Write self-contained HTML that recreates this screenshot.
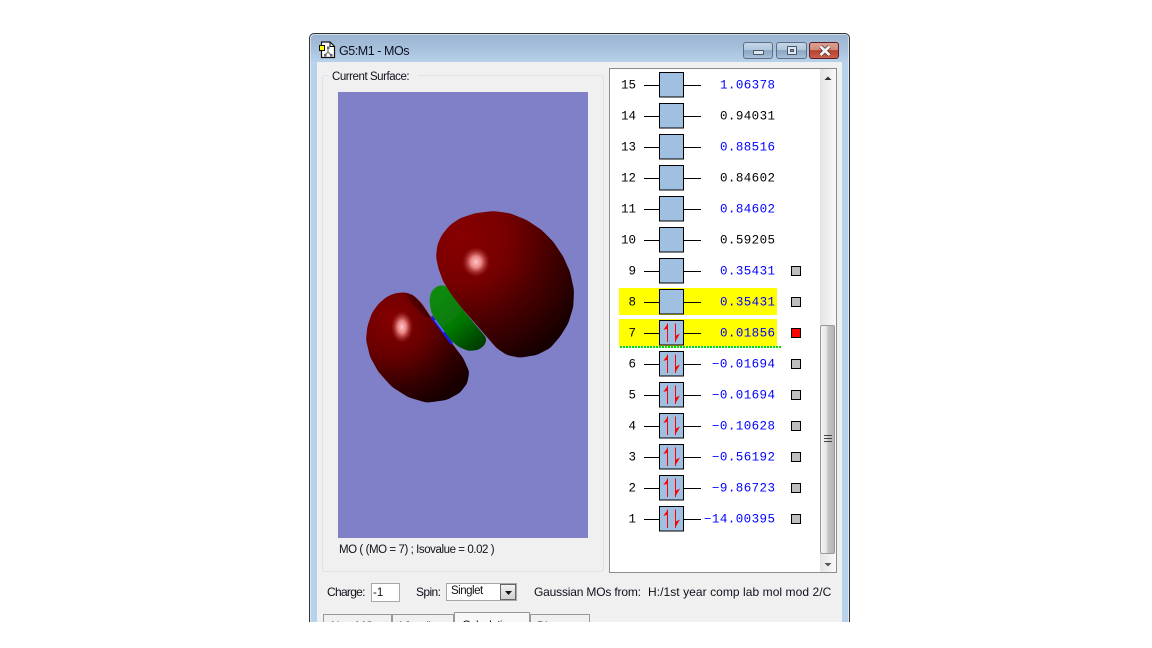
<!DOCTYPE html>
<html><head><meta charset="utf-8">
<style>
html,body{margin:0;padding:0;background:#fff}
body{width:1152px;height:648px;overflow:hidden;position:relative;font-family:"Liberation Sans",sans-serif;font-size:12px;color:#111}
div,span{position:absolute;box-sizing:border-box}
.t{white-space:nowrap;line-height:14px}
</style></head><body>
<div id="clip" style="left:0;top:0;width:1152px;height:622px;overflow:hidden">
<div style="left:309px;top:33px;width:541px;height:620px;background:linear-gradient(#98b3d0 0,#a6c0dc 14px,#b9d2ec 29px,#b9d2ec 100%);border:1px solid #333;border-bottom:0;border-radius:5px 5px 0 0;box-shadow:inset 1px 1px 0 rgba(255,255,255,.5),inset -1px 0 0 rgba(255,255,255,.5)"></div>
<div style="left:317px;top:62px;width:525px;height:570px;background:#f0f0f0"></div>
<svg style="position:absolute;left:319px;top:41px" width="18" height="18" viewBox="0 0 18 18"><path d="M2.500 1H11L15.500 5.500V16.500H2.500Z" fill="#fff" stroke="#111" stroke-width="1.200"/><path d="M11 1V5.500H15.500" fill="none" stroke="#111"/><path d="M9 6.500V11L6 14M9 11L12 14" stroke="#888" stroke-width="1.500" fill="none"/><rect x="8" y="5.500" width="2.500" height="2.500" fill="#666"/><rect x="5" y="13" width="2.500" height="2.500" fill="#666"/><rect x="11" y="13" width="2.500" height="2.500" fill="#666"/><rect x=".5" y="4.500" width="5" height="5" fill="#ff0" stroke="#111"/></svg>
<div class="t" style="left:339px;top:44px;font-size:12.5px;letter-spacing:-.45px;color:#10101c">G5:M1 - MOs</div>
<div style="left:743px;top:42px;width:30px;height:17px;border:1px solid #5d6f85;border-radius:3px;background:linear-gradient(#c5d6e8 0,#b2c7dc 45%,#8ba6c2 50%,#a8c0d8 100%)"><div style="left:9px;top:7px;width:11px;height:5px;background:#dfe6ee;border:1px solid #46566a;border-radius:1px"></div></div>
<div style="left:776px;top:42px;width:31px;height:17px;border:1px solid #5d6f85;border-radius:3px;background:linear-gradient(#c5d6e8 0,#b2c7dc 45%,#8ba6c2 50%,#a8c0d8 100%)"><div style="left:10px;top:3px;width:10px;height:9px;background:#dfe6ee;border:1px solid #46566a;border-radius:1px"><div style="left:2px;top:2px;width:4px;height:3px;background:#7f99b5;border:1px solid #46566a"></div></div></div>
<div style="left:809px;top:42px;width:30px;height:17px;border:1px solid #5c1f24;border-radius:3px;background:linear-gradient(#dca093 0,#d18a7c 45%,#b8402e 50%,#c9604e 100%)"><svg style="position:absolute;left:8px;top:2px" width="14" height="12"><path d="M2.500 1.500L11.500 10M11.500 1.500L2.500 10" stroke="#4a2a2a" stroke-width="4.200"/><path d="M2.500 1.500L11.500 10M11.500 1.500L2.500 10" stroke="#f4f4f4" stroke-width="2.800"/></svg></div>

<div style="left:322px;top:75px;width:282px;height:497px;border:1px solid #dde1e8;border-radius:3px"></div>
<div class="t" style="left:328px;top:70px;width:90px;background:#f0f0f0;padding:0 4px;color:#10101c;font-size:11.5px;letter-spacing:-.45px">Current Surface:</div>
<div style="left:338px;top:92px;width:250px;height:446px;background:#8080c9"></div>
<svg style="position:absolute;left:338px;top:92px" width="250" height="446" viewBox="338 92 250 446">
<defs>
<filter id="sm" x="-5%" y="-5%" width="110%" height="110%"><feGaussianBlur stdDeviation="2"/><feComponentTransfer><feFuncA type="linear" slope="10" intercept="-4.500"/></feComponentTransfer></filter>
<radialGradient id="b" gradientUnits="userSpaceOnUse" cx="462" cy="238" r="135"><stop offset="0" stop-color="#880000"/><stop offset=".35" stop-color="#760000"/><stop offset=".65" stop-color="#470000"/><stop offset="1" stop-color="#170000"/></radialGradient>
<radialGradient id="s" gradientUnits="userSpaceOnUse" cx="392" cy="318" r="95"><stop offset="0" stop-color="#860000"/><stop offset=".4" stop-color="#680000"/><stop offset=".75" stop-color="#300000"/><stop offset="1" stop-color="#160000"/></radialGradient>
<linearGradient id="g" gradientUnits="userSpaceOnUse" x1="435" y1="295" x2="480" y2="348"><stop offset="0" stop-color="#0a8a0a"/><stop offset=".5" stop-color="#067a06"/><stop offset="1" stop-color="#023a02"/></linearGradient>
<radialGradient id="h"><stop offset="0" stop-color="#ffc8c8"/><stop offset=".4" stop-color="#f49090" stop-opacity=".9"/><stop offset="1" stop-color="#b03030" stop-opacity="0"/></radialGradient>
<linearGradient id="dk" gradientUnits="userSpaceOnUse" x1="408" y1="312" x2="428" y2="300"><stop offset="0" stop-color="#200000" stop-opacity="0"/><stop offset="1" stop-color="#200000" stop-opacity=".85"/></linearGradient>
</defs>
<polygon filter="url(#sm)" points="429.300,300 431,291.700 436.700,286 445,285 450,290 463,310 486.700,338.300 485,345 478.300,350 468.300,351 458.300,346.700 446.700,336.700 436.700,323.300 431,311.700" fill="url(#g)"/>
<polygon filter="url(#sm)" points="436,256.700 437.300,245 441.700,235 450,225 460,218.300 475,213.300 493.300,211 510,213.300 526.700,220 541.700,230 553.300,241.700 563.300,256.700 570,271.700 574,290 573.300,306.700 568.300,323.300 560,336.700 550,348.300 536.700,355 520,357.700 506.700,355 496.700,348.300 486.700,336.700 475,323.300 463.300,310 451.700,295 443.300,281.700 438.300,268.300" fill="url(#b)"/>
<polygon filter="url(#sm)" points="366,340 367.300,326.700 371.700,313.300 378.300,304 386.700,296.700 395,293.300 405,292.300 413.300,295 421.700,303.300 431.700,318.300 443.300,333.300 453.300,345 463.300,358.300 469.300,371.700 467.300,383.300 460,392.700 446.700,400 426.700,402.700 408.300,397.300 391.700,386.700 378.300,371.700 370,356.700" fill="url(#s)"/>
<polygon points="405,293 413,295.500 421,304 430.500,318 424,316 412,304" fill="url(#dk)"/>
<path d="M431.500 316.500L452 344" stroke="#1818e8" stroke-width="2.600" fill="none"/>
<path d="M435 320L444 332" stroke="#5a6cff" stroke-width="1.500" fill="none"/>
<ellipse cx="476" cy="262" rx="14" ry="15" fill="url(#h)"/>
<ellipse cx="402" cy="327" rx="11" ry="16" fill="url(#h)"/>
</svg>
<div class="t" style="left:339px;top:543px;font-size:11.5px;letter-spacing:-.43px;color:#10101c">MO ( (MO = 7) ; Isovalue = 0.02 )</div>

<div style="left:609px;top:68px;width:228px;height:505px;background:#fff;border:1px solid #8c8c8c"></div>
<div style="left:820px;top:69px;width:16px;height:503px;background:linear-gradient(90deg,#e4e4e4,#f8f8f8)"></div>
<svg style="position:absolute;left:820px;top:69px" width="16" height="503"><path d="M4.500 11L8 7.500L11.500 11Z" fill="#333"/><path d="M4.500 494L8 497.500L11.500 494Z" fill="#555"/></svg>
<div style="left:820px;top:325px;width:15px;height:229px;border:1px solid #999;border-radius:2px;background:linear-gradient(90deg,#f5f5f5 0,#e6e6e6 40%,#c4c4c4 55%,#b4b4b4 100%)"></div>
<svg style="position:absolute;left:824px;top:435px" width="8" height="8"><path d="M0 .5H8M0 3.500H8M0 6.500H8" stroke="#444"/></svg>

<div style="left:619px;top:288px;width:158px;height:27px;background:#ff0"></div>
<div style="left:619px;top:319px;width:158px;height:27px;background:#ff0"></div>
<div style="left:620px;top:346px;width:162px;height:2px;background:repeating-linear-gradient(90deg,#00e000 0,#00e000 2px,transparent 2px,transparent 3px)"></div>

<svg style="position:absolute;left:610px;top:69px" width="210" height="503" viewBox="610 69 210 503" font-family="'Liberation Mono',monospace" font-size="12.500">
<defs>
<g id="box"><path d="M644 .5H659M684 .5H701" stroke="#000" stroke-width="1"/><rect x="659.500" y="-12.500" width="24" height="24.500" fill="#9fc0e0" stroke="#000" stroke-width="1"/></g>
<g id="ar"><path d="M667.500 -9.500V9M675.500 -9.500V9" stroke="#f00" stroke-width="1"/><path d="M668 -9.500L663.300 -3L668 -4.500ZM675 9L680 .5L675 3Z" fill="#f00"/></g>
</defs>
<g transform="translate(0,85)"><use href="#box"/><text x="636" y="3.500" text-anchor="end">15</text><text x="775" y="3.500" text-anchor="end" fill="#0000ff" textLength="55">1.06378</text></g>
<g transform="translate(0,116)"><use href="#box"/><text x="636" y="3.500" text-anchor="end">14</text><text x="775" y="3.500" text-anchor="end" fill="#000" textLength="55">0.94031</text></g>
<g transform="translate(0,147)"><use href="#box"/><text x="636" y="3.500" text-anchor="end">13</text><text x="775" y="3.500" text-anchor="end" fill="#0000ff" textLength="55">0.88516</text></g>
<g transform="translate(0,178)"><use href="#box"/><text x="636" y="3.500" text-anchor="end">12</text><text x="775" y="3.500" text-anchor="end" fill="#000" textLength="55">0.84602</text></g>
<g transform="translate(0,209)"><use href="#box"/><text x="636" y="3.500" text-anchor="end">11</text><text x="775" y="3.500" text-anchor="end" fill="#0000ff" textLength="55">0.84602</text></g>
<g transform="translate(0,240)"><use href="#box"/><text x="636" y="3.500" text-anchor="end">10</text><text x="775" y="3.500" text-anchor="end" fill="#000" textLength="55">0.59205</text></g>
<g transform="translate(0,271)"><use href="#box"/><text x="636" y="3.500" text-anchor="end">9</text><text x="775" y="3.500" text-anchor="end" fill="#0000ff" textLength="55">0.35431</text><rect x="791.500" y="-4.500" width="9" height="9" fill="#bebebe" stroke="#000"/></g>
<g transform="translate(0,302)"><use href="#box"/><text x="636" y="3.500" text-anchor="end">8</text><text x="775" y="3.500" text-anchor="end" fill="#0000ff" textLength="55">0.35431</text><rect x="791.500" y="-4.500" width="9" height="9" fill="#bebebe" stroke="#000"/></g>
<g transform="translate(0,333)"><use href="#box"/><use href="#ar"/><text x="636" y="3.500" text-anchor="end">7</text><text x="775" y="3.500" text-anchor="end" fill="#0000ff" textLength="55">0.01856</text><rect x="791.500" y="-4.500" width="9" height="9" fill="#f00" stroke="#000"/></g>
<g transform="translate(0,364)"><use href="#box"/><use href="#ar"/><text x="636" y="3.500" text-anchor="end">6</text><text x="775" y="3.500" text-anchor="end" fill="#0000ff" textLength="63">−0.01694</text><rect x="791.500" y="-4.500" width="9" height="9" fill="#bebebe" stroke="#000"/></g>
<g transform="translate(0,395)"><use href="#box"/><use href="#ar"/><text x="636" y="3.500" text-anchor="end">5</text><text x="775" y="3.500" text-anchor="end" fill="#0000ff" textLength="63">−0.01694</text><rect x="791.500" y="-4.500" width="9" height="9" fill="#bebebe" stroke="#000"/></g>
<g transform="translate(0,426)"><use href="#box"/><use href="#ar"/><text x="636" y="3.500" text-anchor="end">4</text><text x="775" y="3.500" text-anchor="end" fill="#0000ff" textLength="63">−0.10628</text><rect x="791.500" y="-4.500" width="9" height="9" fill="#bebebe" stroke="#000"/></g>
<g transform="translate(0,457)"><use href="#box"/><use href="#ar"/><text x="636" y="3.500" text-anchor="end">3</text><text x="775" y="3.500" text-anchor="end" fill="#0000ff" textLength="63">−0.56192</text><rect x="791.500" y="-4.500" width="9" height="9" fill="#bebebe" stroke="#000"/></g>
<g transform="translate(0,488)"><use href="#box"/><use href="#ar"/><text x="636" y="3.500" text-anchor="end">2</text><text x="775" y="3.500" text-anchor="end" fill="#0000ff" textLength="63">−9.86723</text><rect x="791.500" y="-4.500" width="9" height="9" fill="#bebebe" stroke="#000"/></g>
<g transform="translate(0,519)"><use href="#box"/><use href="#ar"/><text x="636" y="3.500" text-anchor="end">1</text><text x="775" y="3.500" text-anchor="end" fill="#0000ff" textLength="71">−14.00395</text><rect x="791.500" y="-4.500" width="9" height="9" fill="#bebebe" stroke="#000"/></g>
</svg>

<div class="t" style="left:327px;top:585px;font-size:12px;letter-spacing:-.7px;color:#10101c">Charge:</div>
<div style="left:371px;top:583px;width:29px;height:19px;background:#fff;border:1px solid #a8a8a8"></div>
<div class="t" style="left:373px;top:586px;font-size:11.5px">-1</div>
<div class="t" style="left:416px;top:585px;font-size:12px;letter-spacing:-.6px;color:#10101c">Spin:</div>
<div style="left:446px;top:583px;width:71px;height:18px;background:#fff;border:1px solid #a8a8a8"></div>
<div class="t" style="left:451px;top:584px;font-size:11.5px;letter-spacing:-.5px">Singlet</div>
<div style="left:500px;top:584px;width:16px;height:16px;background:linear-gradient(#f2f2f2,#d0d0d0);border:1px solid #666"><svg style="position:absolute;left:3px;top:5px" width="9" height="6"><path d="M1 1H8L4.500 5Z" fill="#111"/></svg></div>
<div class="t" style="left:534px;top:585px;font-size:12px;letter-spacing:-.18px;color:#10101c">Gaussian MOs from:</div>
<div class="t" style="left:648px;top:585px;font-size:12px;letter-spacing:.06px;color:#10101c">H:/1st year comp lab mol mod 2/C</div>

<div style="left:323px;top:614px;width:69px;height:20px;background:#f0f0f0;border:1px solid #999"></div>
<div style="left:392px;top:614px;width:62px;height:20px;background:#f0f0f0;border:1px solid #999"></div>
<div style="left:530px;top:614px;width:60px;height:20px;background:#f0f0f0;border:1px solid #999"></div>
<div style="left:454px;top:612px;width:76px;height:22px;background:#f8f8f8;border:1px solid #999"></div>
<div class="t" style="left:331px;top:619px;font-size:12px;letter-spacing:-.7px">New MOs</div>
<div class="t" style="left:400px;top:619px;font-size:12px;letter-spacing:-.7px">Visualize</div>
<div class="t" style="left:462px;top:618px;font-size:12px;letter-spacing:-.7px">Calculation</div>
<div class="t" style="left:537px;top:619px;font-size:12px;letter-spacing:-.7px">Diagrams</div>
</div>
</body></html>
